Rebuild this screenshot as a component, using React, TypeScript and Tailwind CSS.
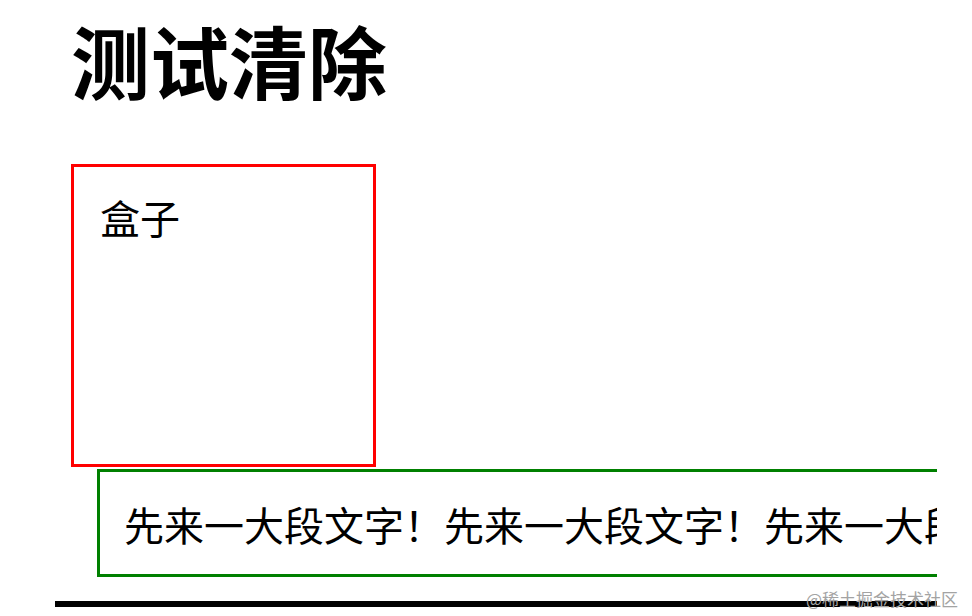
import React from "react";

export default function App() {
  const cjk = { fontFamily: '"Microsoft YaHei", "Noto Sans CJK SC", sans-serif' };
  return (
    <div className="relative w-[972px] h-[616px] bg-white overflow-hidden" style={cjk}>
      <div className="ml-[55px] w-[882px] overflow-hidden">
        <h1 className="ml-[16px] pt-[20px] text-[79px] leading-none font-bold text-black">测试清除</h1>
        <div className="ml-[16px] mt-[65px] w-[305px] h-[303px] border-[3px] border-[#ff0000] pl-[26px] pt-[30px] text-[40px] leading-none text-black">
          盒子
        </div>
        <div className="ml-[42px] mt-[2px] w-[1200px] h-[108px] border-[3px] border-[#008000] pl-[24px] pt-[32px] text-[40px] leading-none text-black whitespace-nowrap">
          先来一大段文字！先来一大段文字！先来一大段文字！
        </div>
        <div className="mt-[24px] h-[6px] bg-black" />
      </div>
      <div className="absolute left-[806px] top-[590px] text-[17px] leading-none text-[#a3a3a3] whitespace-nowrap">
        @稀土掘金技术社区
      </div>
    </div>
  );
}
